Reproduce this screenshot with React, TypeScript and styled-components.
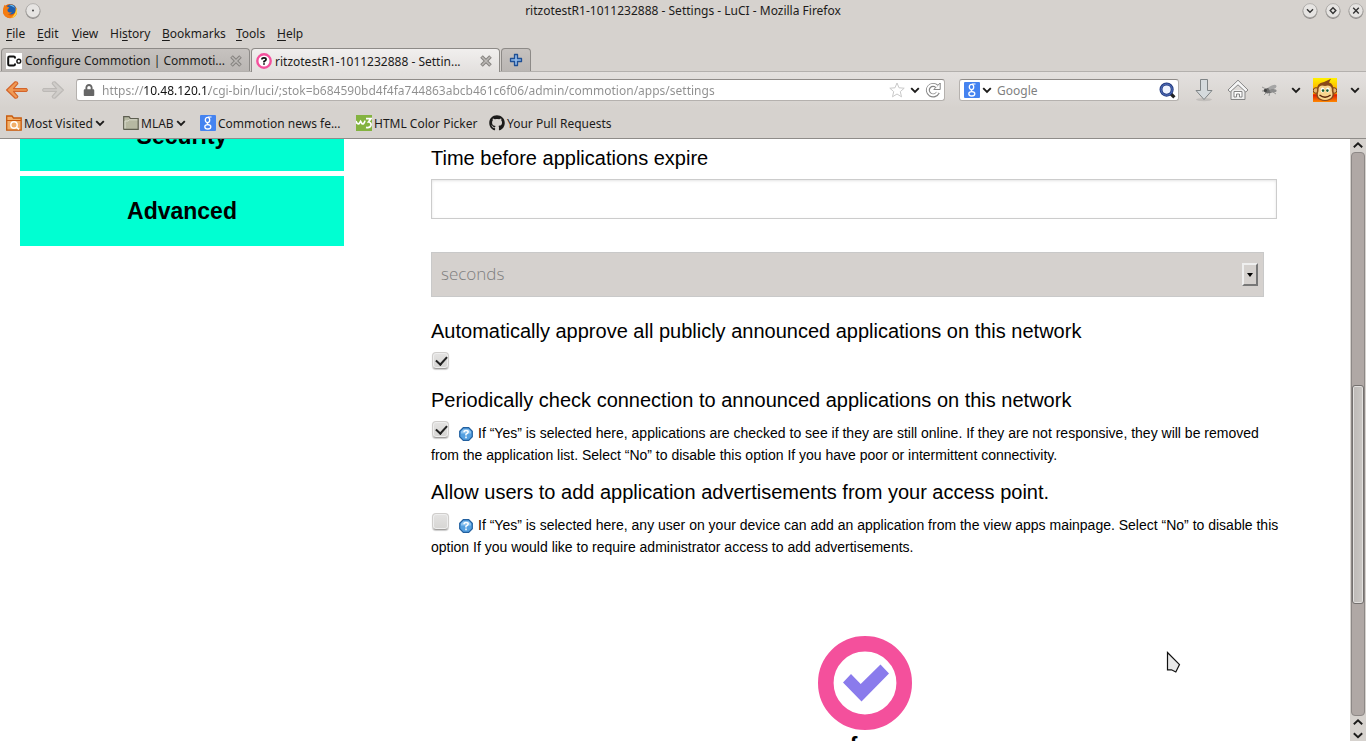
import React from "react";
import styled, { createGlobalStyle } from "styled-components";
import { FaGithub, FaLock } from "react-icons/fa";

const GlobalStyle = createGlobalStyle`
  * { box-sizing: border-box; }
  body { margin: 0; background: #fff; }
  button, input, select { font: inherit; }
`;

const uiFont = `"Noto Sans", "Open Sans", sans-serif`;
const pageFont = `"Liberation Sans", Arial, sans-serif`;

const Window = styled.div`
  display: flex;
  flex-direction: column;
  height: 100vh;
  overflow: hidden;
  position: relative;
  font-family: ${uiFont};
  font-size: 12px;
  color: #1c1b1a;
`;

const Chrome = styled.header`
  flex: none;
  background: #d6d2ce;
  border-bottom: 1px solid #8f8c89;
`;

const TitleBar = styled.div`
  display: grid;
  grid-template-columns: 64px 1fr 64px;
  align-items: center;
  height: 21px;
`;

const TitleSide = styled.div<{ $end?: boolean }>`
  display: flex;
  align-items: center;
  justify-content: ${(p) => (p.$end ? "flex-end" : "flex-start")};
  gap: 7px;
  padding: 0 2px;
`;

const WindowTitle = styled.div`
  text-align: center;
  white-space: nowrap;
`;

const IconButton = styled.button<{ $w?: number }>`
  display: inline-flex;
  align-items: center;
  justify-content: center;
  flex: none;
  width: ${(p) => (p.$w ? `${p.$w}px` : "auto")};
  padding: 0;
  border: 0;
  background: none;
  color: inherit;
`;

const MenuBar = styled.nav`
  display: flex;
  height: 24px;
  padding-left: 6px;
`;

const MenuItem = styled.button<{ $w: number }>`
  width: ${(p) => p.$w}px;
  padding: 0;
  border: 0;
  background: none;
  color: inherit;
  text-align: left;
  u { text-underline-offset: 2px; }
`;

const TabStrip = styled.div`
  display: flex;
  align-items: flex-end;
  gap: 1px;
  height: 27px;
  padding: 0 1px;
  border-bottom: 1px solid #b3b0ad;
`;

const Tab = styled.div<{ $active?: boolean }>`
  display: flex;
  align-items: center;
  width: 249px;
  height: ${(p) => (p.$active ? 24 : 23)}px;
  margin-bottom: ${(p) => (p.$active ? -1 : 0)}px;
  padding: 1px 7px 0 4px;
  gap: 3px;
  border: 1px solid #8d8a87;
  border-bottom: 0;
  border-radius: 4px 4px 0 0;
  background: ${(p) =>
    p.$active ? "linear-gradient(#f1efee, #e3e0de)" : "linear-gradient(#c6c2bf, #bab6b3)"};
`;

const TabLabel = styled.button`
  flex: 1;
  min-width: 0;
  padding: 0;
  border: 0;
  background: none;
  color: inherit;
  text-align: left;
  white-space: nowrap;
  overflow: hidden;
`;

const NewTab = styled.button`
  display: flex;
  align-items: center;
  justify-content: center;
  width: 30px;
  height: 23px;
  padding: 0;
  border: 1px solid #8d8a87;
  border-bottom: 0;
  border-radius: 4px 4px 0 0;
  background: linear-gradient(#c6c2bf, #bab6b3);
`;

const NavBar = styled.div`
  display: flex;
  align-items: center;
  height: 36px;
  padding-left: 5px;
  background: linear-gradient(#e3e0de, #d6d2ce);
`;

const FieldBox = styled.div<{ $w?: number }>`
  display: flex;
  align-items: center;
  flex: ${(p) => (p.$w ? `0 0 ${p.$w}px` : "1 1 0")};
  min-width: 0;
  height: 22px;
  padding: 0 2px 0 4px;
  border: 1px solid #b5b1ae;
  border-top-color: #8f8b88;
  border-radius: 3px;
  background: #fff;
  & + & { margin-left: 14px; }
`;

const AddressInput = styled.input`
  flex: 1;
  min-width: 0;
  padding: 0;
  margin-left: 5px;
  border: 0;
  outline: 0;
  color: transparent;
  background: linear-gradient(to right, #8e8e8e 0 42px, #111 42px 107px, #8e8e8e 107px);
  -webkit-background-clip: text;
  background-clip: text;
`;

const SearchInput = styled.input`
  flex: 1;
  min-width: 0;
  padding: 0;
  margin-left: 3px;
  border: 0;
  outline: 0;
  background: transparent;
  &::placeholder { color: #7f7f7f; opacity: 1; }
`;

const ToolButtons = styled.div`
  display: flex;
  align-items: center;
  margin-left: 7px;
`;

const BookmarkBar = styled.nav`
  display: flex;
  align-items: center;
  height: 30px;
  padding-left: 6px;
`;

const Bookmark = styled.a<{ $w: number }>`
  display: flex;
  align-items: center;
  gap: 2px;
  width: ${(p) => p.$w}px;
  color: inherit;
  text-decoration: none;
  white-space: nowrap;
  svg { flex: none; }
`;

const Viewport = styled.div`
  display: flex;
  flex: 1;
  min-height: 0;
`;

const Page = styled.div`
  display: flex;
  flex: 1;
  min-width: 0;
  overflow: hidden;
  background: #fff;
  color: #000;
  font-family: ${pageFont};
`;

const Sidebar = styled.nav`
  display: flex;
  flex-direction: column;
  gap: 5px;
  width: 24%;
  margin: -38px 87px 0 20px;
`;

const SideLink = styled.a`
  display: flex;
  align-items: center;
  justify-content: center;
  flex: none;
  height: 70px;
  background: #00ffd2;
  color: #000;
  font-size: 23px;
  font-weight: 700;
  text-decoration: none;
`;

const Settings = styled.main`
  flex: 1;
  min-width: 0;
  padding: 5px 51px 0 0;
`;

const FieldLabel = styled.label`
  display: block;
  margin-bottom: 7px;
  font-size: 20px;
  line-height: 28px;
`;

const ExpireInput = styled.input`
  display: block;
  width: 97.5%;
  height: 40px;
  margin-bottom: 33px;
  padding: 0 10px;
  border: 1px solid #ccc;
  box-shadow: inset 0 1px 3px #e4e4e4;
  outline: 0;
`;

const SelectWrap = styled.div`
  position: relative;
  width: 96%;
  margin-bottom: 20px;
`;

const UnitSelect = styled.select`
  display: block;
  appearance: none;
  width: 100%;
  height: 45px;
  padding: 0 9px 2px;
  border: 1px solid #c9c9c9;
  border-radius: 0;
  background: #d5d1ce;
  color: #7f7f7f;
  font-family: "Open Sans", "Noto Sans", sans-serif;
  font-size: 17px;
  font-weight: 300;
  opacity: 1;
`;

const SelectArrow = styled.span`
  position: absolute;
  top: 11px;
  right: 6px;
  display: flex;
  align-items: center;
  justify-content: center;
  width: 16px;
  height: 23px;
  border: 2px solid;
  border-color: #efefef #777 #777 #efefef;
  pointer-events: none;
`;

const Choice = styled.div<{ $gap: number }>`
  margin-bottom: ${(p) => p.$gap}px;
  font-size: 14px;
  line-height: 22px;
`;

const CheckBox = styled.input`
  appearance: none;
  position: relative;
  float: left;
  width: 17px;
  height: 17px;
  margin: 0 10px 0 1px;
  border: 1px solid #cfcdcb;
  border-bottom-color: #a09e9c;
  border-radius: 4px;
  background: linear-gradient(#e4e3e2, #d6d5d3);
  box-shadow: 0 1px 1px #ccc, inset 0 0 0 1px #eee;
  &:checked::after {
    content: "";
    position: absolute;
    left: 5px;
    top: 1px;
    width: 5px;
    height: 9px;
    border: solid #222;
    border-width: 0 2px 2px 0;
    transform: rotate(42deg);
  }
`;

const HelpText = styled.p`
  margin: 0;
  padding-top: 1px;
  svg { vertical-align: -3px; margin-right: 5px; }
`;

const Confirm = styled.button`
  display: flex;
  flex-direction: column;
  align-items: center;
  margin: 78px auto 0;
  padding: 0;
  border: 0;
  background: none;
  color: #000;
  font-size: 23px;
  font-weight: 700;
  line-height: 32px;
`;

const ScrollBar = styled.div`
  display: flex;
  flex-direction: column;
  align-items: center;
  flex: none;
  width: 16px;
  background: #d6d2ce;
`;

const Track = styled.div`
  display: flex;
  flex-direction: column;
  flex: 1;
  width: 14px;
  border: 1px solid #8d8886;
  border-radius: 4px;
  background: #b0a8a5;
`;

const TrackSpace = styled.div<{ $part: number }>`
  flex: ${(p) => p.$part} 1 0;
`;

const Thumb = styled.div`
  flex: 218 1 0;
  border: 1px solid #74706e;
  border-radius: 3px;
  background: linear-gradient(to right, #bdb9b6, #cbc8c5);
  box-shadow: inset 0 0 0 1px #e2e0de;
`;

const Pointer = styled.svg`
  position: absolute;
  left: 1166px;
  top: 651px;
`;

function RoundButton({ label, children }: { label: string; children: React.ReactNode }) {
  return (
    <IconButton aria-label={label}>
      <svg width="16" height="18" viewBox="0 0 16 18">
        <circle cx="8" cy="9.6" r="7.4" fill="#8f8c8a" />
        <circle cx="8" cy="8.6" r="7" fill="#e6e4e2" stroke="#aaa7a4" strokeWidth="0.8" />
        {children}
      </svg>
    </IconButton>
  );
}

function Chevron() {
  return (
    <svg width="10" height="8" viewBox="0 0 10 8">
      <path d="M1.2 2.2 L5 6 L8.8 2.2" fill="none" stroke="#1c1b1a" strokeWidth="1.9" />
    </svg>
  );
}

function ScrollArrow({ down }: { down?: boolean }) {
  return (
    <IconButton aria-label={down ? "Scroll down" : "Scroll up"}>
      <svg width="16" height={down ? 12 : 13} viewBox={down ? "0 0 16 12" : "0 0 16 13"}>
        <path
          d={down ? "M3.8 4.2 L8 8.2 L12.2 4.2" : "M3.8 8.2 L8 4.2 L12.2 8.2"}
          fill="none"
          stroke="#1c1b1a"
          strokeWidth="1.9"
        />
      </svg>
    </IconButton>
  );
}

function CloseMark() {
  return (
    <svg width="12" height="12" viewBox="0 0 12 12">
      <path d="M1.5 1.5 L10.5 10.5 M10.5 1.5 L1.5 10.5" stroke="#85827f" strokeWidth="3.6" />
      <path d="M2 2 L10 10 M10 2 L2 10" stroke="#bbb8b5" strokeWidth="1.6" />
    </svg>
  );
}

function GoogleIcon() {
  return (
    <svg width="16" height="16" viewBox="0 0 16 16">
      <rect width="16" height="16" rx="1" fill="#4583f0" />
      <ellipse cx="7.5" cy="5" rx="2.2" ry="2.6" fill="none" stroke="#fff" strokeWidth="1.3" />
      <path d="M8 2 H11.5 M8.5 7.3 C6.5 8.4 7 9 8.6 9.4" fill="none" stroke="#fff" strokeWidth="1.2" />
      <ellipse cx="7.8" cy="11.8" rx="3" ry="2.2" fill="none" stroke="#fff" strokeWidth="1.3" />
    </svg>
  );
}

function FirefoxIcon() {
  return (
    <svg width="16" height="16" viewBox="0 0 16 16">
      <circle cx="8" cy="8" r="7" fill="#e66000" />
      <circle cx="9" cy="6.4" r="5" fill="#1f5fae" />
      <path d="M7 2 Q11 1 13 5 Q10 3 7 2Z" fill="#6fc1ef" />
      <path d="M1.6 4 L2.6 1.8 L4.6 3.6 L7.4 4.4 L5.6 6.4 Q5 9 8 9.6 L10 9 Q8.6 11.6 5.6 11 Q9 14 12.4 11 Q14.4 8.6 13.8 4.6 Q16 8 14.4 11.4 Q12 15.4 7.6 15.2 Q2 14.6 1 9Z" fill="#f47c12" />
      <path d="M13.8 4.6 Q16 8 14.4 11.4 Q12.6 14.6 9 15 Q14.6 11 13.8 4.6Z" fill="#ffd23c" />
    </svg>
  );
}

function ArrowIcon({ muted }: { muted?: boolean }) {
  return (
    <svg width="24" height="20" viewBox="0 0 24 20">
      <path
        d={
          muted
            ? "M2.5 8.6 H15.5 L11.2 3.6 Q11.6 1.4 13.8 1.8 L22.4 10 L13.8 18.2 Q11.6 18.6 11.2 16.4 L15.5 11.4 H2.5 Q0.8 10 2.5 8.6 Z"
            : "M21.5 8.6 H8.5 L12.8 3.6 Q12.4 1.4 10.2 1.8 L1.6 10 L10.2 18.2 Q12.4 18.6 12.8 16.4 L8.5 11.4 H21.5 Q23.2 10 21.5 8.6 Z"
        }
        fill={muted ? "#d0cdca" : "#f09a55"}
        stroke={muted ? "#bcb9b6" : "#d4642a"}
        strokeWidth="1.2"
        strokeLinejoin="round"
      />
    </svg>
  );
}

function HelpIcon() {
  return (
    <svg width="14" height="14" viewBox="0 0 14 14">
      <path d="M4.3 0.7 H9.7 L13.3 4.3 V9.7 L9.7 13.3 H4.3 L0.7 9.7 V4.3 Z" fill="#55a0e0" stroke="#23609f" strokeWidth="1.2" />
      <path d="M4.4 2.2 H9.6 L12 4.6 V6.5 H2 V4.6 Z" fill="#8cc3f0" />
      <path d="M5 5.2 Q5 3.4 7 3.4 Q9.2 3.4 9.2 5 Q9.2 6.2 7 7.2 V8.6 M7 9.6 V11.2" fill="none" stroke="#fff" strokeWidth="1.5" />
    </svg>
  );
}

function MonkeyIcon() {
  return (
    <svg width="24" height="24" viewBox="0 0 24 24">
      <defs>
        <linearGradient id="sunset" x1="0" y1="0" x2="0" y2="1">
          <stop offset="0" stopColor="#fff200" />
          <stop offset="0.65" stopColor="#ff9a00" />
          <stop offset="0.7" stopColor="#e01800" />
          <stop offset="1" stopColor="#ff8a00" />
        </linearGradient>
      </defs>
      <rect width="24" height="24" fill="url(#sunset)" />
      <circle cx="3" cy="12.5" r="2.8" fill="#e8b46c" stroke="#7a3d10" />
      <circle cx="21" cy="12.5" r="2.8" fill="#e8b46c" stroke="#7a3d10" />
      <path d="M4 13 Q3 5 11 4 L18 0.8 L16 4.5 Q21 6 20.5 13 Q23 22 12 23 Q1 22 4 13Z" fill="#8a4a18" />
      <path d="M5.5 13 Q5 8 9 7.6 Q12 8.4 15 7.6 Q19.4 8 18.8 13 Q21.6 21 12 22 Q2.6 21 5.5 13Z" fill="#f8d48c" />
      <ellipse cx="9.6" cy="12" rx="1.9" ry="2.6" fill="#fff" />
      <ellipse cx="14.8" cy="12" rx="1.9" ry="2.6" fill="#fff" />
      <circle cx="10" cy="12.6" r="1.3" fill="#165a2a" />
      <circle cx="14.4" cy="12.6" r="1.3" fill="#165a2a" />
      <path d="M6.5 17 Q12 21.5 17.6 17" fill="none" stroke="#5a2408" strokeWidth="1.4" />
    </svg>
  );
}

const menus = [
  { pre: "", key: "F", post: "ile", w: 31 },
  { pre: "", key: "E", post: "dit", w: 35 },
  { pre: "", key: "V", post: "iew", w: 38 },
  { pre: "Hi", key: "s", post: "tory", w: 52 },
  { pre: "", key: "B", post: "ookmarks", w: 74 },
  { pre: "", key: "T", post: "ools", w: 41 },
  { pre: "", key: "H", post: "elp", w: 40 },
];

export default function App() {
  return (
    <>
      <GlobalStyle />
      <Window>
        <Chrome>
          <TitleBar>
            <TitleSide>
              <FirefoxIcon />
              <RoundButton label="Window menu">
                <circle cx="8" cy="8.6" r="1" fill="#444" />
              </RoundButton>
            </TitleSide>
            <WindowTitle>ritzotestR1-1011232888 - Settings - LuCI - Mozilla Firefox</WindowTitle>
            <TitleSide $end>
              <RoundButton label="Minimize">
                <path d="M5 7.2 L8 10.2 L11 7.2" fill="none" stroke="#333" strokeWidth="1.4" />
              </RoundButton>
              <RoundButton label="Maximize">
                <path d="M8 5.8 L10.8 8.6 L8 11.4 L5.2 8.6 Z" fill="none" stroke="#333" strokeWidth="1.4" />
              </RoundButton>
              <RoundButton label="Close">
                <path d="M5.2 5.8 L10.8 11.4 M10.8 5.8 L5.2 11.4" stroke="#333" strokeWidth="1.4" />
              </RoundButton>
            </TitleSide>
          </TitleBar>
          <MenuBar>
            {menus.map((m) => (
              <MenuItem key={m.post} $w={m.w}>
                {m.pre}
                <u>{m.key}</u>
                {m.post}
              </MenuItem>
            ))}
          </MenuBar>
          <TabStrip>
            <Tab>
              <svg width="16" height="16" viewBox="0 0 16 16">
                <rect width="16" height="16" fill="#fff" />
                <path d="M9 5.6 V4.8 Q9 3.4 7.6 3.4 H3.6 Q2.2 3.4 2.2 4.8 V11.2 Q2.2 12.6 3.6 12.6 H7.6 Q9 12.6 9 11.2 V10.4" fill="none" stroke="#111" strokeWidth="2" />
                <circle cx="12.8" cy="8.2" r="1.9" fill="none" stroke="#111" strokeWidth="1.4" />
              </svg>
              <TabLabel>Configure Commotion | Commoti...</TabLabel>
              <IconButton aria-label="Close tab"><CloseMark /></IconButton>
            </Tab>
            <Tab $active>
              <svg width="16" height="16" viewBox="0 0 16 16">
                <circle cx="8" cy="8" r="6.7" fill="#fff" stroke="#f4509c" strokeWidth="2.4" />
                <path d="M5.9 6.6 Q5.9 4.8 8 4.8 Q10.1 4.8 10.1 6.4 Q10.1 7.4 8 8.4 V9.4 M8 10.2 V11.8" fill="none" stroke="#111" strokeWidth="1.7" />
              </svg>
              <TabLabel>ritzotestR1-1011232888 - Settin...</TabLabel>
              <IconButton aria-label="Close tab"><CloseMark /></IconButton>
            </Tab>
            <NewTab aria-label="New tab">
              <svg width="14" height="14" viewBox="0 0 14 14">
                <path d="M5.5 1.5 H8.5 V5.5 H12.5 V8.5 H8.5 V12.5 H5.5 V8.5 H1.5 V5.5 H5.5 Z" fill="#8fb8e8" stroke="#1f4f94" strokeWidth="1.3" strokeLinejoin="round" />
              </svg>
            </NewTab>
          </TabStrip>
          <NavBar>
            <IconButton aria-label="Back" $w={24}><ArrowIcon /></IconButton>
            <IconButton aria-label="Forward" $w={47}><ArrowIcon muted /></IconButton>
            <FieldBox>
              <IconButton as="span" $w={16}><FaLock size={12} color="#666" /></IconButton>
              <AddressInput
                aria-label="Address"
                defaultValue="https://10.48.120.1/cgi-bin/luci/;stok=b684590bd4f4fa744863abcb461c6f06/admin/commotion/apps/settings"
              />
              <IconButton aria-label="Bookmark this page" $w={18}>
                <svg width="16" height="16" viewBox="0 0 16 16">
                  <path d="M8 1 L10 5.8 L15.2 6.2 L11.3 9.6 L12.5 14.8 L8 12 L3.5 14.8 L4.7 9.6 L0.8 6.2 L6 5.8 Z" fill="#fff" stroke="#c9c9c9" />
                </svg>
              </IconButton>
              <IconButton aria-label="Show history" $w={18}><Chevron /></IconButton>
              <IconButton aria-label="Reload" $w={18}>
                <svg width="16" height="16" viewBox="0 0 16 16">
                  <path d="M12 4.5 A5.3 5.3 0 1 0 13 10.5" fill="none" stroke="#858585" strokeWidth="4" />
                  <path d="M8.8 7.5 H15.2 V1 Z" fill="#fff" stroke="#858585" />
                  <path d="M12 4.5 A5.3 5.3 0 1 0 12.8 10.3" fill="none" stroke="#fff" strokeWidth="2" />
                </svg>
              </IconButton>
            </FieldBox>
            <FieldBox $w={220}>
              <GoogleIcon />
              <IconButton aria-label="Choose search engine" $w={14}><Chevron /></IconButton>
              <SearchInput aria-label="Search" placeholder="Google" />
              <IconButton aria-label="Search" $w={18}>
                <svg width="17" height="17" viewBox="0 0 17 17">
                  <path d="M11 11 L15.4 15.4" stroke="#222" strokeWidth="3.2" />
                  <circle cx="7.6" cy="7.6" r="5.6" fill="#eef3ff" stroke="#223a80" strokeWidth="3" />
                  <circle cx="7.6" cy="7.6" r="5.6" fill="none" stroke="#5a78c4" strokeWidth="1" />
                </svg>
              </IconButton>
            </FieldBox>
            <ToolButtons>
              <IconButton aria-label="Downloads" $w={36}>
                <svg width="20" height="24" viewBox="0 0 20 24">
                  <ellipse cx="10" cy="21.6" rx="8" ry="1.6" fill="#c2bfbc" />
                  <path d="M6.5 1.5 H13.5 V12.5 H18 L10 21.5 L2 12.5 H6.5 Z" fill="#d5dadd" stroke="#7f8486" />
                </svg>
              </IconButton>
              <IconButton aria-label="Home" $w={32}>
                <svg width="22" height="22" viewBox="0 0 22 22">
                  <path d="M4 11 V20.5 H18 V11" fill="#eee" stroke="#858585" />
                  <path d="M7 18 V12.5 H15 V18 H12.5 V15 H9.5 V18 Z" fill="#fff" stroke="#858585" />
                  <path d="M11 1.2 L21 11 L18.8 13 L11 5.8 L3.2 13 L1 11 Z" fill="#f6f6f6" stroke="#858585" />
                </svg>
              </IconButton>
              <IconButton aria-label="Firebug" $w={32}>
                <svg width="18" height="14" viewBox="0 0 18 14">
                  <path d="M1 4 L5 6 M3 12 L7 8 M8 13 L9 9 M1 8 H5 M12 9 L15 11" stroke="#888" strokeWidth="0.8" />
                  <ellipse cx="8" cy="7.4" rx="4.6" ry="2.8" fill="#6b6b6b" transform="rotate(-14 8 7.4)" />
                  <ellipse cx="11.5" cy="4.4" rx="4.2" ry="2" fill="#a5a5a5" transform="rotate(-22 11.5 4.4)" />
                  <ellipse cx="12" cy="7.8" rx="3.6" ry="1.7" fill="#8c8c8c" />
                  <circle cx="4.4" cy="7.4" r="1.6" fill="#444" />
                </svg>
              </IconButton>
              <IconButton aria-label="Firebug options" $w={20}><Chevron /></IconButton>
              <IconButton aria-label="Greasemonkey" $w={38}><MonkeyIcon /></IconButton>
              <IconButton aria-label="Greasemonkey options" $w={22}><Chevron /></IconButton>
            </ToolButtons>
          </NavBar>
          <BookmarkBar>
            <Bookmark href="#visited" $w={117}>
              <svg width="16" height="16" viewBox="0 0 16 16">
                <path d="M0.7 15.2 V1 H6 L7.5 3 H15.2 V15.2 Z" fill="#f2b06a" stroke="#c85a0c" strokeWidth="1.3" />
                <path d="M0.7 5.5 H15" stroke="#c85a0c" />
                <circle cx="8" cy="10" r="3.2" fill="none" stroke="#fff" strokeWidth="1.4" />
                <path d="M10 12 L13 14.4" stroke="#fff" strokeWidth="1.6" />
              </svg>
              Most Visited <Chevron />
            </Bookmark>
            <Bookmark href="#mlab" $w={77}>
              <svg width="16" height="16" viewBox="0 0 16 16">
                <path d="M0.7 14 V1.6 H6 L7.5 3.6 H15.2 V14.4 H1 Z" fill="#b6b8a2" stroke="#5d5e50" strokeWidth="1.2" />
                <path d="M2 13.4 V6 H5 L6.5 4.8 H14.4" fill="none" stroke="#dcddcf" />
              </svg>
              MLAB <Chevron />
            </Bookmark>
            <Bookmark href="#news" $w={156}>
              <GoogleIcon />
              Commotion news fe...
            </Bookmark>
            <Bookmark href="#colors" $w={133}>
              <svg width="16" height="16" viewBox="0 0 16 16">
                <rect width="16" height="16" fill="#84b340" />
                <path d="M0 6 Q1 9.5 3 8.8 L4.6 6.4 L6 8.8 Q8 9.4 9 5.6" fill="none" stroke="#fff" strokeWidth="1.7" />
                <path d="M10 3.6 H15 L12.4 7 Q15.4 7.4 15 10.2 Q14 13.4 10 12.4" fill="none" stroke="#fff" strokeWidth="1.7" />
              </svg>
              HTML Color Picker
            </Bookmark>
            <Bookmark href="#pulls" $w={130}>
              <FaGithub size={16} />
              Your Pull Requests
            </Bookmark>
          </BookmarkBar>
        </Chrome>
        <Viewport>
          <Page>
            <Sidebar>
              <SideLink href="#security">Security</SideLink>
              <SideLink href="#advanced">Advanced</SideLink>
            </Sidebar>
            <Settings>
              <FieldLabel htmlFor="expire">Time before applications expire</FieldLabel>
              <ExpireInput id="expire" type="text" />
              <SelectWrap>
                <UnitSelect aria-label="Time unit" disabled>
                  <option>seconds</option>
                </UnitSelect>
                <SelectArrow>
                  <svg width="6" height="4" viewBox="0 0 6 4"><path d="M0 0 H6 L3 4 Z" /></svg>
                </SelectArrow>
              </SelectWrap>
              <FieldLabel htmlFor="approve">
                Automatically approve all publicly announced applications on this network
              </FieldLabel>
              <Choice $gap={11}>
                <CheckBox id="approve" type="checkbox" defaultChecked />
                <HelpText>&nbsp;</HelpText>
              </Choice>
              <FieldLabel htmlFor="check">
                Periodically check connection to announced applications on this network
              </FieldLabel>
              <Choice $gap={12}>
                <CheckBox id="check" type="checkbox" defaultChecked />
                <HelpText>
                  <HelpIcon />
                  If “Yes” is selected here, applications are checked to see if they are still online. If they are not
                  responsive, they will be removed
                  <br />
                  from the application list. Select “No” to disable this option If you have poor or intermittent
                  connectivity.
                </HelpText>
              </Choice>
              <FieldLabel htmlFor="allow">
                Allow users to add application advertisements from your access point.
              </FieldLabel>
              <Choice $gap={0}>
                <CheckBox id="allow" type="checkbox" />
                <HelpText>
                  <HelpIcon />
                  If “Yes” is selected here, any user on your device can add an application from the view apps mainpage.
                  Select “No” to disable this option If you would like to require administrator access to add
                  advertisements.
                </HelpText>
              </Choice>
              <Confirm>
                <svg width="94" height="94" viewBox="0 0 94 94">
                  <circle cx="47" cy="47" r="39.2" fill="#fff" stroke="#f4509c" strokeWidth="15.6" />
                  <path d="M25 46.5 L33 38 L42.7 48 L62.5 28.5 L71 37.5 L43.5 65.5 Z" fill="#8a7bec" />
                </svg>
                for
              </Confirm>
            </Settings>
          </Page>
          <ScrollBar>
            <ScrollArrow />
            <Track>
              <TrackSpace $part={233} />
              <Thumb />
              <TrackSpace $part={112} />
            </Track>
            <ScrollArrow />
            <ScrollArrow down />
          </ScrollBar>
        </Viewport>
        <Pointer width="16" height="24" viewBox="0 0 16 24">
          <path d="M1.5 1.5 L13.5 13.5 L9.8 21 L5.5 18.8 H1.5 Z" fill="#e8e8e8" stroke="#111" strokeWidth="1.2" />
        </Pointer>
      </Window>
    </>
  );
}
